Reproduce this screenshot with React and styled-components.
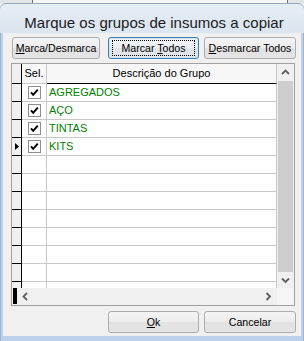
import React from 'react';
import styled, { createGlobalStyle, css } from 'styled-components';

const GlobalStyle = createGlobalStyle`
  html, body { margin: 0; padding: 0; width: 304px; height: 341px; overflow: hidden; background: #f0f0f0; }
  body { font-family: "Liberation Sans", Arial, sans-serif; }
  * { box-sizing: border-box; }
`;

const Screen = styled.div`
  width: 304px;
  height: 341px;
  display: flex;
  flex-direction: column;
  overflow: hidden;
`;

const Backdrop = styled.div`
  height: 3px;
  flex: none;
  background: linear-gradient(to right, #e4e4e4 0 32px, #6d6d6d 32px 33px, #f6f6f6 33px 287px, #6d6d6d 287px 288px, #e4e4e4 288px);
`;

const Window = styled.div`
  flex: 1;
  display: flex;
  flex-direction: column;
  background: #bcd2ea;
  border-radius: 6px 6px 0 0;
  overflow: hidden;
  box-shadow: inset 1px 0 0 #9db5d2, inset -1px 0 0 #9db5d2;
`;

const TitleBar = styled.div`
  height: 30px;
  flex: none;
  padding: 10px 0 0 4px;
  text-align: center;
  font-size: 15px;
  line-height: 17px;
  color: #1b1b1b;
  background: linear-gradient(#e6edf5, #dbe5f0);
  border-top: 1px solid #8ea7c4;
  border-radius: 6px 6px 0 0;
  white-space: nowrap;
`;

const Client = styled.div`
  margin: 0 3px 5px;
  height: 303px;
  background: #f0f0f0;
  display: flex;
  flex-direction: column;
`;

const ButtonRow = styled.div`
  display: flex;
  gap: 5px;
  padding-left: ${p => p.$indent}px;
  margin-top: ${p => p.$top}px;
`;

const Button = styled.button`
  position: relative;
  width: ${p => p.$w}px;
  height: 22px;
  margin: 0 ${p => p.$after || 0}px 0 0;
  padding: 0;
  font-family: "Liberation Sans", Arial, sans-serif;
  font-size: 10.6px;
  line-height: 20px;
  color: #000;
  border: 1px solid #adadad;
  border-radius: 3px;
  background: linear-gradient(#f4f4f4 0%, #ececec 50%, #e2e2e2 51%, #e4e4e4 100%);
  white-space: nowrap;
  ${p => p.$focused && css`
    border-color: #3c7fb1;
    background: linear-gradient(#f2f5f8 0%, #e9edf1 50%, #dfe4e9 51%, #e2e6ea 100%);
    box-shadow: inset 0 0 0 1px #d6e6f4;
    &::after {
      content: '';
      position: absolute;
      inset: 2px 3px;
      border: 1px dotted #000;
    }
  `}
  u { text-decoration: underline; text-underline-offset: 1px; }
`;

const GridFrame = styled.div`
  margin: 4px 0 0 8px;
  width: 284px;
  height: 243px;
  border: 1px solid #a0a0a0;
  background: #fff;
  display: grid;
  grid-template-columns: 265px 17px;
  grid-template-rows: 224px 17px;
`;

const TableArea = styled.div`
  overflow: hidden;
  display: flex;
  flex-direction: column;
`;

const Row = styled.div`
  display: grid;
  grid-template-columns: 10px 25px 230px;
  height: ${p => (p.$header ? 20 : 18)}px;
  flex: none;
`;

const IndCell = styled.div`
  background: #f0f0f0;
  border-right: 1px solid #000;
  border-bottom: 1px solid #000;
  display: flex;
  align-items: center;
  justify-content: flex-end;
  padding-right: 2px;
`;

const Cell = styled.div`
  border-right: 1px solid #c8c8c8;
  border-bottom: 1px solid ${p => (p.$dark ? '#000' : '#c8c8c8')};
  background: ${p => (p.$header ? '#f7f7f7' : '#fff')};
  font-size: 11px;
  line-height: 17px;
  display: flex;
  align-items: center;
  justify-content: ${p => (p.$center ? 'center' : 'flex-start')};
  padding-left: ${p => p.$pad || 0}px;
  color: ${p => (p.$green ? '#008000' : '#000')};
  white-space: nowrap;
  overflow: hidden;
`;

const VScroll = styled.div`
  background: #f0f0f0;
  display: grid;
  grid-template-rows: 17px 1fr 16px;
`;

const ArrowBox = styled.div`
  display: flex;
  align-items: center;
  justify-content: center;
`;

const Thumb = styled.div`
  margin: 0 1px;
  background: #cdcdcd;
`;

const HScroll = styled.div`
  background: #f0f0f0;
  display: grid;
  grid-template-columns: 5px 17px 1fr 17px;
`;

const BlackBar = styled.div`
  margin: 0 0 1px 1px;
  background: #000;
`;

const Corner = styled.div`
  background: #f5f5f5;
`;

const Chevron = ({ dir }) => {
  const pts = {
    up: '1,5 4.5,1.5 8,5',
    down: '1,1.5 4.5,5 8,1.5',
    left: '5,1 1.5,4.5 5,8',
    right: '1.5,1 5,4.5 1.5,8',
  }[dir];
  const vert = dir === 'up' || dir === 'down';
  return (
    <svg width={vert ? 9 : 7} height={vert ? 7 : 9} viewBox={vert ? '0 0 9 7' : '0 0 7 9'}>
      <polyline points={pts} fill="none" stroke="#606060" strokeWidth="1.8" />
    </svg>
  );
};

const CheckBox = () => (
  <svg width="13" height="13" viewBox="0 0 13 13">
    <rect x="0.5" y="0.5" width="12" height="12" fill="#fff" stroke="#8e8e8e" />
    <polyline points="3,6.3 5.2,8.8 9.8,3.6" fill="none" stroke="#000" strokeWidth="2" />
  </svg>
);

const Pointer = () => (
  <svg width="4" height="7" viewBox="0 0 4 7">
    <polygon points="0,0 4,3.5 0,7" fill="#000" />
  </svg>
);

const items = ['AGREGADOS', 'AÇO', 'TINTAS', 'KITS'];
const rows = Array.from({ length: 12 }, (_, i) => items[i] || null);

export default function App() {
  return (
    <>
      <GlobalStyle />
      <Screen>
        <Backdrop />
        <Window>
          <TitleBar>Marque os grupos de insumos a copiar</TitleBar>
          <Client>
            <ButtonRow $indent={9} $top={4}>
              <Button $w={88} $after={3}><u>M</u>arca/Desmarca</Button>
              <Button $w={91} $focused>Marcar <u>T</u>odos</Button>
              <Button $w={92}><u>D</u>esmarcar Todos</Button>
            </ButtonRow>
            <GridFrame>
              <TableArea>
                <Row $header>
                  <IndCell />
                  <Cell $header $center>Sel.</Cell>
                  <Cell $header $center $dark>Descrição do Grupo</Cell>
                </Row>
                {rows.map((name, i) => (
                  <Row key={i}>
                    <IndCell>{i === 3 && <Pointer />}</IndCell>
                    <Cell $center>{name && <CheckBox />}</Cell>
                    <Cell $pad={2} $green>{name}</Cell>
                  </Row>
                ))}
              </TableArea>
              <VScroll>
                <ArrowBox><Chevron dir="up" /></ArrowBox>
                <Thumb />
                <ArrowBox><Chevron dir="down" /></ArrowBox>
              </VScroll>
              <HScroll>
                <BlackBar />
                <ArrowBox><Chevron dir="left" /></ArrowBox>
                <div />
                <ArrowBox><Chevron dir="right" /></ArrowBox>
              </HScroll>
              <Corner />
            </GridFrame>
            <ButtonRow $indent={105} $top={5}>
              <Button $w={91}><u>O</u>k</Button>
              <Button $w={92}>Cancelar</Button>
            </ButtonRow>
          </Client>
        </Window>
      </Screen>
    </>
  );
}
